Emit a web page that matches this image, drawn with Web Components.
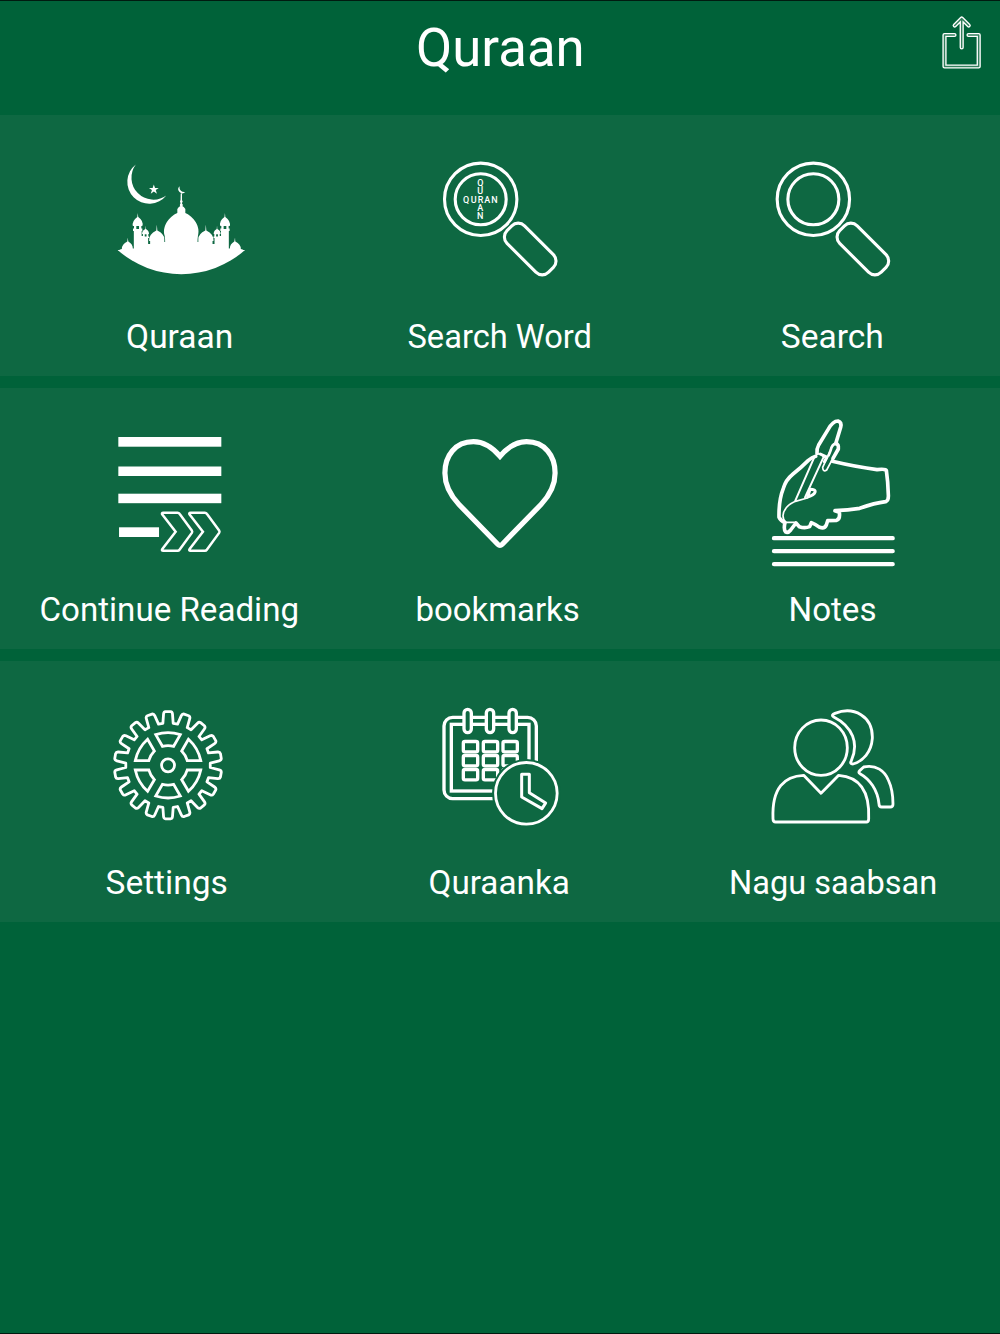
<!DOCTYPE html>
<html lang="so">
<head>
<meta charset="utf-8">
<title>Quraan</title>
<style>
body{margin:0;background:#006239}
</style>
</head>
<body>
<quran-app></quran-app>
<script>
const polar=(cx,cy,r,d)=>{const a=(d-90)*Math.PI/180;return (cx+r*Math.cos(a)).toFixed(2)+' '+(cy+r*Math.sin(a)).toFixed(2)};
const GX=167.7,GY=765.3;
const gearPath=()=>{let p='';for(let i=0;i<18;i++){const a=i*20;
  p+=(i?'L':'M')+polar(GX,GY,42.3,a-7)+'L'+polar(GX,GY,51.4,a-5)+'Q'+polar(GX,GY,53.6,a-4.6)+' '+polar(GX,GY,53.7,a-2.6)
  +'L'+polar(GX,GY,53.7,a+2.6)+'Q'+polar(GX,GY,53.6,a+4.6)+' '+polar(GX,GY,51.4,a+5)+'L'+polar(GX,GY,42.3,a+7)}
  return p+'Z'};
const spokes=()=>[0,60,120,180,240,300].map(a=>`<path transform="translate(-.3) rotate(${a} 168 765.3)" d="M155.7 734.6Q168 730.6 180.3 734.6L173.6 746.3Q168 744.8 162.4 746.3Z"/>`).join('');
const lens=(x)=>`<g fill="none" stroke="#fff" stroke-width="3.1"><circle cx="${x}" cy="199.3" r="36.2"/><circle cx="${x}" cy="199.3" r="25.5"/><rect x="${x+20.1}" y="236.6" width="58.8" height="24.8" rx="9" transform="rotate(45 ${x+49.5} 249)"/></g>`;
const halfMosque=`<path d="M181.500 207V251H117.5Q120 249 121.5 249Q121.500 244 127 241.500Q127.300 239 127.300 237.500Q127.600 239 128 241.500Q132.500 244 132.500 248.500H133.500V231H132.700V228.500H133.700V226H132.500Q131.500 221 137 217L137.400 213L137.900 217Q143.500 221 142 226H141V228.500H142V231H141.300V236H142.600V234H141.700Q141.700 230.500 145 229L145.300 225.500L145.600 229Q148.700 230.500 148.700 234H148V236.500H148.800V238H147.800V244H149.800V241H148.800Q148.500 234 156 230.500L156.500 224.500L157 230.500Q164 234 164 239V242H164.800Q164.800 238.500 164.400 236C161 224 172 215 177 213V209Q178.500 206.500 180.200 206L180.500 193.500H181.500Z"/>`;
const chevron='M163 512.8H177.300Q178.500 512.800 179.200 513.800L191.500 530.500Q192.300 531.700 191.500 532.900L179.200 549.700Q178.500 550.700 177.300 550.700H163Q160.800 550.700 162 549L175.300 531.700L162 514.600Q160.800 512.800 163 512.800Z';
const cells=()=>{let s='';for(const y of [124.500,166.500,208.500])for(const x of [100,160,219])s+=`<rect x="${x}" y="${y}" width="43" height="31" rx="5"/>`;return s};

const ICONS={
 mosque:`<g fill="#fff"><path d="M135.500 164.500A21.900 21.900 0 1 0 166 195.500A22 22 0 0 1 135.500 164.500Z"/>
  <path d="M153.500 184.500L154.700 188L158.400 187.900L155.400 190.100L156.600 193.700L153.500 191.500L150.400 193.700L151.600 190.100L148.600 187.900L152.300 188Z"/>
  <path d="M179.200 186.300A4 4 0 1 0 184.900 192A4.900 4.900 0 0 1 179.200 186.300Z"/>
  ${halfMosque}<g transform="matrix(-1 0 0 1 362 0)">${halfMosque}</g><circle cx="181" cy="201.500" r="1.300"/><circle cx="181" cy="205" r="1.500"/><path d="M117.300 250H244.700A96 96 0 0 1 117.300 250Z"/></g>
  <g fill="#0e6842"><rect x="136" y="226" width="2.700" height="3"/><rect x="223.300" y="226" width="2.700" height="3"/><rect x="144.400" y="234.300" width="1.800" height="2.200"/><rect x="215.800" y="234.300" width="1.800" height="2.200"/></g>`,
 word:lens(480.7)+`<g fill="#fff" font-family="Roboto,sans-serif" font-weight="500" font-size="9" text-anchor="middle"><text x="466.200 473.700 480.600 487.300 494.500" y="202.500">QURAN</text><text x="480.300" y="186.300">Q</text><text x="480.300" y="194.300">U</text><text x="480.300" y="210.700">A</text><text x="480.300" y="219.100">N</text></g>`,
 search:lens(813.7),
 resume:`<g fill="#fff"><rect x="118" y="437" width="103" height="9.700"/><rect x="118" y="466.500" width="103" height="9.500"/><rect x="118" y="493.700" width="103" height="9.500"/><rect x="118.700" y="527.300" width="40" height="9.700"/></g><g fill="none" stroke="#fff" stroke-width="2.500"><path d="${chevron}"/><path transform="translate(27.300)" d="${chevron}"/></g>`,
 heart:`<path fill="none" stroke="#fff" stroke-width="5.200" d="M500 456.300C492 447 483 441.700 473.500 441.700C455 441.700 444.900 456 444.900 473C444.900 485 451 496 459 504.500L498 544.500Q500 546.500 502 544.500L541 504.500C549 496 555.100 485 555.100 473C555.100 456 545 441.700 526.500 441.700C517 441.700 508 447 500 456.300Z"/>`,
 notes:`<g transform="translate(760 410) scale(.33333)" fill="none" stroke="#fff" stroke-width="11" stroke-linejoin="round" stroke-linecap="round">
  <path d="M168 139Q157 142 146 151Q125 172 100 192Q78 210 71 235Q57 270 58 322Q63 333 76 338Q71 358 78 366Q85 370 93 360L109 339L119 350Q135 356 150 350L155 338Q170 344 180 352Q195 357 200 345L204 332L230 331Q242 329 239 307L226 302Q265 300 300 295Q345 279 378 275Q387 272 386 255Q385 215 380 181Q378 176 352 179Q290 171 218 154"/>
  <path d="M172 130Q170 118 177 105L205 59Q219 33 235 33Q247 37 243 52L228 101Q238 102 236 117L220 145" />
  <path stroke-width="8" d="M228 101Q217 103 213 121L207 136"/>
  <path stroke-width="5" d="M174 131Q185 132 194 142M211 125L189 172Q190 188 201 180L218 148"/>
  <path stroke-width="6" d="M165 139L107 272M191 143L136 262"/>
  <path stroke-width="9" d="M182 132L202 141L194 155"/>
  <path stroke-width="5" d="M107 274Q72 290 70 317Q70 330 79 337H107M107 274L143 264"/>
  <path stroke-width="9" d="M151 238Q169 238 166 247Q163 256 144 261Z"/>
  <path stroke-width="13" d="M43 384.500H399M43 423.500H399M43 462.500H399"/></g>`,
 gear:`<g fill="none" stroke="#fff" stroke-width="2.800"><path stroke-linejoin="round" d="${gearPath()}"/>${spokes()}<circle cx="${GX}" cy="${GY}" r="6.500"/></g>`,
 calendar:`<g transform="translate(430 700) scale(.33333)" fill="none" stroke="#fff" stroke-width="10">
  <rect x="42" y="52" width="277" height="244" rx="26"/><rect x="64" y="73" width="233" height="200"/>
  <g fill="#0e6842"><rect x="102" y="28" width="22" height="70" rx="11"/><rect x="169" y="28" width="22" height="70" rx="11"/><rect x="237" y="28" width="22" height="70" rx="11"/></g>
  <g stroke-width="10">${cells()}</g>
  <circle cx="289" cy="280" r="103" fill="#0e6842" stroke="none"/><circle cx="289" cy="280" r="92.500" stroke-width="8.500"/>
  <path stroke-width="9" stroke-linejoin="round" d="M275 223H298V278L347 309L336 326L275 291Z"/></g>`,
 people:`<g transform="translate(760 700) scale(.33333)" fill="none" stroke="#fff" stroke-width="8.500" stroke-linejoin="round">
  <ellipse cx="184" cy="143" rx="79" ry="83"/>
  <path d="M48 366Q40 366 40 356C36 263 75 228 132 226L184 280L237 226C292 230 331 263 327 356Q327 366 320 366Z"/>
  <path d="M221 50Q214 45 226 40C282 18 340 48 338 115C335 157 310 183 280 192Q269 192 275 182C298 131 280 80 221 50Z"/>
  <path d="M312 201C350 193 375 213 386 240Q400 270 400 312Q400 321 392 321H366Q358 321 358 312C354 270 330 237 301 221Q294 218 301 211Z"/></g>`
};

class ShareIcon extends HTMLElement{
 connectedCallback(){this.attachShadow({mode:'open'}).innerHTML=`<style>:host{display:block;width:60px;height:80px}svg{display:block}</style>
 <svg width="60" height="80" viewBox="932 1 60 80" fill="none" stroke-linecap="round" stroke-linejoin="round"><g stroke="#fff" stroke-width="4.200"><path d="M954.500 35H944.500V66.500H978.700V35H968.500"/><path d="M961.700 47.500V18.500M954.700 25.500L961.700 18.500L968.700 25.500"/></g><g stroke="#327f5c" stroke-width="1.500"><path d="M954.500 35H944.500V66.500H978.700V35H968.500"/><path d="M961.700 47.500V18.500M954.700 25.500L961.700 18.500L968.700 25.500"/></g></svg>`}
}
class FitLabel extends HTMLElement{
 connectedCallback(){this.attachShadow({mode:'open'}).innerHTML=`<style>:host{display:block;white-space:nowrap}span{display:inline-block;transform-origin:50% 50%}</style><span><slot></slot></span>`;
  const s=this.shadowRoot.querySelector('span'),w=+this.getAttribute('width');
  s.style.transform=`scaleX(${(w/s.offsetWidth).toFixed(4)})`}
}
class AppHeader extends HTMLElement{
 connectedCallback(){this.attachShadow({mode:'open'}).innerHTML=`<style>:host{display:grid;grid-template-columns:68px 1fr 68px;height:114px;font-size:54px;line-height:64px;text-align:center}fit-label{margin-top:15px}</style><i></i><fit-label width="169"><slot></slot></fit-label><share-icon></share-icon>`;
 }
}
class MenuItem extends HTMLElement{
 connectedCallback(){const g=n=>this.getAttribute(n);this.attachShadow({mode:'open'}).innerHTML=`<style>:host{display:flex;flex-direction:column;align-items:center;flex:1 1 0;min-width:0;padding-top:26px;cursor:pointer}svg{display:block;flex:none}fit-label{font-size:33.500px;line-height:42px;margin-left:${g('shift')||0}px}</style>
 <svg width="160" height="175" viewBox="${g('view')} 160 175">${ICONS[g('icon')]}</svg><fit-label width="${g('width')}"><slot></slot></fit-label>`}
}
class MenuRow extends HTMLElement{
 connectedCallback(){this.attachShadow({mode:'open'}).innerHTML=`<style>:host{display:flex;height:261px;box-sizing:border-box;background:#0e6842}</style><slot></slot>`}
}
class QuranApp extends HTMLElement{
 connectedCallback(){this.attachShadow({mode:'open'}).innerHTML=`<style>:host{display:flex;flex-direction:column;box-sizing:border-box;width:1000px;height:1334px;overflow:hidden;border-top:1px solid #001b10;border-bottom:1px solid #001b10;background:#006239;color:#fff;font-family:Roboto,"Liberation Sans",sans-serif}main{display:flex;flex-direction:column;gap:12px}</style>
 <app-header>Quraan</app-header><main>
 <menu-row><menu-item icon="mosque" view="86.67 141" width="107" shift="26">Quraan</menu-item><menu-item icon="word" view="420 141" width="184">Search Word</menu-item><menu-item icon="search" view="753.33 141" width="103" shift="-2">Search</menu-item></menu-row>
 <menu-row><menu-item icon="resume" view="86.67 414" width="260" shift="5">Continue Reading</menu-item><menu-item icon="heart" view="420 414" width="164" shift="-5">bookmarks</menu-item><menu-item icon="notes" view="753.33 414" width="88" shift="-1">Notes</menu-item></menu-row>
 <menu-row><menu-item icon="gear" view="86.67 687" width="122">Settings</menu-item><menu-item icon="calendar" view="420 687" width="141" shift="-1">Quraanka</menu-item><menu-item icon="people" view="753.33 687" width="208" shift="-1">Nagu saabsan</menu-item></menu-row>
 </main>`}
}
customElements.define('share-icon',ShareIcon);
customElements.define('fit-label',FitLabel);
customElements.define('app-header',AppHeader);
customElements.define('menu-item',MenuItem);
customElements.define('menu-row',MenuRow);
customElements.define('quran-app',QuranApp);
</script>
</body>
</html>
